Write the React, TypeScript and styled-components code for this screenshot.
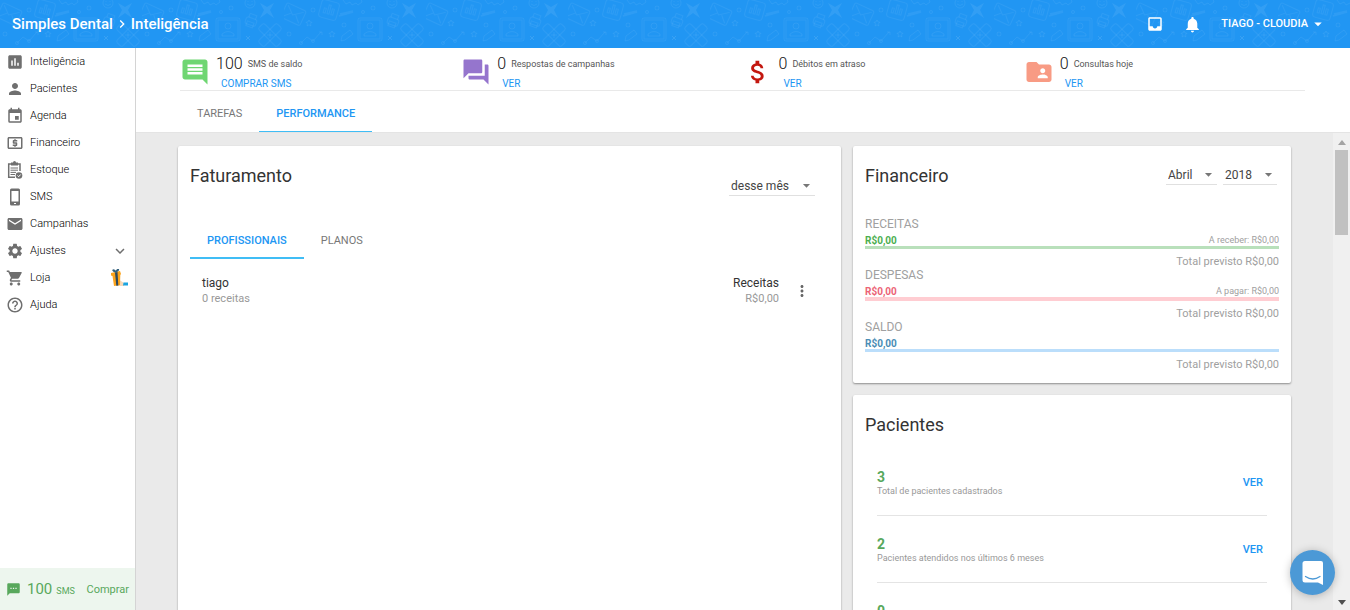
import React from 'react';
import styled, { createGlobalStyle } from 'styled-components';
import {
  MdArrowDropDown, MdAssessment, MdAttachMoney, MdComment, MdEvent, MdExpandMore, MdFolderShared,
  MdHelpOutline, MdInbox, MdLocalAtm, MdMail, MdMoreVert, MdNotifications, MdPerson,
  MdQuestionAnswer, MdSettings, MdShoppingCart, MdTextsms, MdChevronRight,
} from 'react-icons/md';

const Global = createGlobalStyle`
  *, *::before, *::after { box-sizing: border-box; }
  body { margin: 0; font-family: Roboto, "Liberation Sans", sans-serif; font-size: 12px; color: #333; background: #fff; }
  button, select { font-family: inherit; margin: 0; padding: 0; border: 0; background: none; cursor: pointer; }
  a { text-decoration: none; color: inherit; }
  h1, h2, p, ul { margin: 0; padding: 0; font-weight: 400; }
  ul { list-style: none; }
  svg { display: block; flex: none; }
`;

const Page = styled.div`
  display: flex;
  flex-direction: column;
  height: 100vh;
  overflow: hidden;
`;

const Header = styled.header`
  position: relative;
  display: flex;
  flex: none;
  align-items: center;
  justify-content: space-between;
  height: 48px;
  padding: 0 23px 0 12px;
  background: #2196f3;
  color: #fff;
`;

const HeaderArt = styled.svg`
  position: absolute;
  inset: 0;
  width: 100%;
  height: 100%;
`;

const Crumbs = styled.h1`
  position: relative;
  display: flex;
  align-items: center;
  gap: 1px;
  font-size: 15px;
  font-weight: 500;
  line-height: 20px;
`;

const HeaderActions = styled.div`
  position: relative;
  display: flex;
  align-items: center;
`;

const IconButton = styled.button`
  display: flex;
  margin-right: 19px;
  color: inherit;
`;

const UserButton = styled.button`
  display: flex;
  align-items: center;
  gap: 1px;
  color: inherit;
  font-size: 11px;
  font-weight: 500;
  line-height: 16px;
`;

const Body = styled.div`
  display: flex;
  flex: 1;
  min-height: 0;
`;

const Sidebar = styled.nav`
  display: flex;
  flex: none;
  flex-direction: column;
  justify-content: space-between;
  width: 136px;
  border-right: 1px solid #d4d4d4;
`;

const NavLink = styled.a`
  display: flex;
  align-items: center;
  gap: 6px;
  height: 27px;
  padding: 0 6px;
  color: #000;
  font-size: 11px;
  font-weight: 300;
  svg { color: #6f6f6f; }
`;

const NavEnd = styled.span`
  display: flex;
  margin-left: auto;
`;

const SmsBar = styled.div`
  display: flex;
  align-items: center;
  height: 42px;
  padding: 0 6px;
  background: #edf6ee;
  color: #58a85c;
  font-size: 11px;
  a { margin-left: auto; }
`;

const SmsCount = styled.span`
  display: flex;
  align-items: baseline;
  gap: 4px;
  margin-left: 6px;
  font-size: 9px;
  strong { font-size: 15px; font-weight: 400; }
`;

const Main = styled.main`
  display: flex;
  flex: 1;
  flex-direction: column;
  min-width: 0;
`;

const TopPanel = styled.div`
  flex: none;
  padding: 0 45px 0 44px;
  border-bottom: 1px solid #e4e4e4;
`;

const Stats = styled.div`
  display: grid;
  grid-template-columns: repeat(4, 1fr);
  height: 43px;
  border-bottom: 1px solid #e9e9e9;
`;

const Stat = styled.div<{ $color: string }>`
  display: flex;
  gap: 6px;
  padding-top: 8px;
  > svg { margin-top: 1px; color: ${(p) => p.$color}; }
`;

const StatText = styled.div`
  font-size: 9px;
  color: #555;
`;

const StatValue = styled.div`
  display: flex;
  align-items: center;
  gap: 5px;
  height: 16px;
  line-height: 16px;
  strong { color: #111; font-size: 16px; font-weight: 300; }
`;

const StatLink = styled.a`
  display: block;
  margin: 5px 0 0 5px;
  color: #2196f3;
  font-size: 10px;
  line-height: 14px;
`;

const Tabs = styled.div`
  display: flex;
  height: 41px;
`;

const Tab = styled.button<{ $on?: boolean; $thick?: boolean }>`
  padding: ${(p) => (p.$thick ? 2 : 4)}px 17px 0;
  border-bottom: ${(p) => (p.$thick ? 2 : 1)}px solid ${(p) => (p.$on ? '#40bdf5' : 'transparent')};
  color: ${(p) => (p.$on ? '#2196f3' : '#777')};
  font-size: 11px;
  font-weight: ${(p) => (p.$on ? 500 : 400)};
`;

const Viewport = styled.div`
  display: flex;
  flex: 1;
  min-height: 0;
  background: #eaeaea;
`;

const Board = styled.div`
  display: grid;
  flex: 1;
  grid-template-columns: 3fr 2fr;
  min-width: 0;
  padding: 7px 36px;
  overflow: hidden;
`;

const Cell = styled.div`
  display: flex;
  flex-direction: column;
  gap: 12px;
  min-width: 0;
  padding: 6px;
`;

const Card = styled.section<{ $tall?: boolean }>`
  flex: none;
  min-height: ${(p) => (p.$tall ? '520px' : '0')};
  padding: 18px 12px 12px;
  border-radius: 2px;
  background: #fff;
  box-shadow: 0 1px 2px rgba(0, 0, 0, 0.4);
`;

const CardHead = styled.div<{ $drop?: boolean }>`
  display: flex;
  justify-content: space-between;
  align-items: flex-start;
  height: 50px;
  padding-right: ${(p) => (p.$drop ? 14 : 2)}px;
  > div { display: flex; gap: 6px; padding-top: ${(p) => (p.$drop ? 11 : 0)}px; }
`;

const CardTitle = styled.h2`
  color: #333;
  font-size: 18px;
  line-height: 24px;
`;

const SelectBox = styled.label<{ $width: number }>`
  display: flex;
  align-items: center;
  width: ${(p) => p.$width}px;
  height: 21px;
  border-bottom: 1px solid #e0e0e0;
  color: #777;
  select {
    flex: 1;
    min-width: 0;
    padding: 1px 0 0 2px;
    appearance: none;
    color: #444;
    font-size: 12px;
    line-height: 16px;
    outline: 0;
  }
`;

const CardTabs = styled.div`
  display: flex;
  height: 38px;
  margin-top: 7px;
`;

const Person = styled.div`
  display: flex;
  justify-content: space-between;
  padding: 16px 18px 0 12px;
  font-size: 12px;
  line-height: 16px;
  color: #333;
  small { display: block; color: #999; font-size: 11px; line-height: 15px; }
`;

const PersonEnd = styled.div`
  display: flex;
  align-items: center;
  gap: 14px;
  text-align: right;
  button { color: #666; }
`;

const Group = styled.div`
  color: #a0a0a0;
  font-size: 11px;
  h3 { margin: 0; font-size: 12px; font-weight: 400; line-height: 14px; }
  p { padding-top: 6px; line-height: 13px; text-align: right; }
`;

const GroupLine = styled.div<{ $color: string; $bar: string; $size: number }>`
  display: flex;
  justify-content: space-between;
  border-bottom: ${(p) => p.$size}px solid ${(p) => p.$bar};
  font-size: 9px;
  line-height: 11px;
  padding-top: 4px;
  strong { color: ${(p) => p.$color}; font-size: 10px; font-weight: 700; }
`;

const Groups = styled.div`
  padding-top: 3px;
`;

const PatientList = styled.ul`
  && { margin-top: 12px; }
`;

const PatientRow = styled.li`
  display: flex;
  align-items: center;
  justify-content: space-between;
  height: 67px;
  margin: 0 12px;
  padding: 2px 4px 0 0;
  border-bottom: 1px solid #e4e4e4;
  color: #999;
  font-size: 9px;
  line-height: 12px;
  strong { display: block; color: #58a85c; font-size: 14px; line-height: 16px; }
  a { color: #2196f3; font-size: 11px; font-weight: 500; }
`;

const ScrollTrack = styled.div`
  display: flex;
  flex: none;
  flex-direction: column;
  align-items: center;
  justify-content: space-between;
  width: 17px;
  padding: 7px 0 5px;
  background: #f0f0f0;
`;

const ScrollTop = styled.div`
  display: flex;
  flex-direction: column;
  align-items: center;
  gap: 5px;
`;

const ScrollThumb = styled.div`
  width: 13px;
  height: 85px;
  background: #c1c1c1;
`;

const ChatButton = styled.button`
  position: fixed;
  right: 15px;
  bottom: 15px;
  display: flex;
  align-items: center;
  justify-content: center;
  width: 45px;
  height: 45px;
  border-radius: 50%;
  background: #4c99d6;
  box-shadow: 0 1px 8px rgba(0, 0, 0, 0.25);
`;

const HeaderPattern = () => (
  <HeaderArt aria-hidden="true">
    <defs>
      <pattern id="doodles" width="142" height="48" patternUnits="userSpaceOnUse">
        <g fill="none" stroke="#fff" strokeOpacity=".06" strokeWidth="1">
          <path d="M118 3l7 4 7-4-4 7 4 8-7-5-7 5 4-8z" fill="#fff" fillOpacity=".08" stroke="none" />
          <g transform="rotate(25 9 14)"><rect x="-1" y="6" width="21" height="16" rx="2" /><path d="M1 8l8 7 9-7M1 20l6-6M18 20l-6-6" /></g>
          <g transform="rotate(15 45 10)"><rect x="36" y="1" width="18" height="18" rx="3" /><path d="M40 14V9h2v5zM44 14V5h2v9zM48 14V8h2v6z" /></g>
          <rect x="74" y="18" width="24" height="23" rx="2" /><rect x="76" y="20" width="20" height="19" />
          <circle cx="86" cy="26" r="3" /><path d="M80 36v-2q6-5 12 0v2z" />
          <circle cx="29" cy="10" r="2" /><circle cx="79" cy="12" r="1.5" /><circle cx="89" cy="8" r="2" /><circle cx="60" cy="25" r="2" /><circle cx="5" cy="34" r="2" />
          <path d="M55 16l14-4M56 14l13-3" strokeWidth="1.5" />
          <path d="M59 0l3 4 4-2 2 3 4-2 2 2 4-3-1-3" />
          <circle cx="108" cy="3" r="5" /><path d="M105 4q3 3 6 0M106 1v1M110 1v1" />
          <g transform="rotate(20 109 20)"><rect x="104" y="18" width="11" height="7" rx="2" /><path d="M106 18v-4h7v4M106 22h7v5h-7z" /></g>
          <g transform="translate(128 35)"><rect x="-4" y="-13" width="8" height="26" rx="2" transform="rotate(45)" /><rect x="-4" y="-13" width="8" height="26" rx="2" transform="rotate(-45)" /><path d="M-3 0h6M0-3v6" /></g>
          <path d="M17 43l6-6 6 4 8-9M35 32h3v3" /><circle cx="17" cy="43" r="1.5" /><circle cx="29" cy="41" r="1.5" />
          <path d="M25 20l1 2 2 .3-1.500 1.500.4 2-1.900-1-1.900 1 .4-2-1.500-1.500 2-.3zM48 31l1 2 2 .3-1.500 1.500.4 2-1.900-1-1.900 1 .4-2-1.500-1.500 2-.3z" />
          <path d="M57 41l1-5 8-6 3 4-8 6z" /><path d="M104 36l4 4m0-4l-4 4" strokeOpacity=".1" />
        </g>
      </pattern>
    </defs>
    <rect width="100%" height="100%" fill="url(#doodles)" />
  </HeaderArt>
);

const StockIcon = () => (
  <svg width="18" height="18" viewBox="0 0 18 18" fill="none" stroke="currentColor">
    <path d="M9 16.200H2.700V3H14v7" strokeWidth="1.500" />
    <path d="M5 1.600h2a1.500 1.500 0 013 0h2v3H5z" fill="currentColor" stroke="none" />
    <path d="M4.500 7h7.500M4.500 9.200h7.500M4.500 11.400H10M4.500 13.500H9" />
    <circle cx="13" cy="14.500" r="3.300" fill="currentColor" stroke="none" />
    <path d="M11.500 14.500l1.200 1.200 2-2.200" stroke="#fff" />
  </svg>
);

const PhoneIcon = () => (
  <svg width="18" height="18" viewBox="0 0 18 18">
    <path fill="currentColor" fillRule="evenodd" d="M5.500.5h7a1.500 1.500 0 011.500 1.500v14a1.500 1.500 0 01-1.500 1.500h-7A1.500 1.500 0 014 16V2A1.500 1.500 0 015.500.5zM5.500 3v10.500h7V3zM8 15v1h2v-1z" />
  </svg>
);

const GiftIcon = () => (
  <svg width="19" height="18" viewBox="0 0 19 18">
    <path d="M8 10l6 4v3H7z" fill="#f8d9b8" />
    <path d="M1 4l9-2 1 3-.7 1L10 16l-6 1L2.500 7 1 6.500z" fill="#fba31c" />
    <path d="M5 3.500l2.500-.5.800 13.500-2 .3z" fill="#2d4a5e" />
    <path d="M6 3C3-1 1 2 6 3c1-4 5-3 0 0z" fill="none" stroke="#35627e" strokeWidth="1.300" />
    <path d="M13.500 13.500H18V16.500h-5z" fill="#1ba4e0" />
  </svg>
);

const NAV = [
  { label: 'Inteligência', icon: <MdAssessment size={18} /> },
  { label: 'Pacientes', icon: <MdPerson size={18} /> },
  { label: 'Agenda', icon: <MdEvent size={18} /> },
  { label: 'Financeiro', icon: <MdLocalAtm size={18} /> },
  { label: 'Estoque', icon: <StockIcon /> },
  { label: 'SMS', icon: <PhoneIcon /> },
  { label: 'Campanhas', icon: <MdMail size={18} /> },
  { label: 'Ajustes', icon: <MdSettings size={18} />, end: <MdExpandMore size={18} /> },
  { label: 'Loja', icon: <MdShoppingCart size={18} />, end: <GiftIcon /> },
  { label: 'Ajuda', icon: <MdHelpOutline size={18} /> },
];

const STATS = [
  { value: '100', label: 'SMS de saldo', link: 'COMPRAR SMS', color: '#6fd672', icon: <MdComment size={30} /> },
  { value: '0', label: 'Respostas de campanhas', link: 'VER', color: '#9575cd', icon: <MdQuestionAnswer size={30} /> },
  { value: '0', label: 'Débitos em atraso', link: 'VER', color: '#c3170f', icon: <MdAttachMoney size={30} /> },
  { value: '0', label: 'Consultas hoje', link: 'VER', color: '#f89b84', icon: <MdFolderShared size={30} /> },
];

const GROUPS = [
  { name: 'RECEITAS', pending: 'A receber: R$0,00', color: '#4caf50', bar: '#b9e0bb', size: 3 },
  { name: 'DESPESAS', pending: 'A pagar: R$0,00', color: '#ec6476', bar: '#ffcdd2', size: 4 },
  { name: 'SALDO', pending: '', color: '#4a8db5', bar: '#bbdefb', size: 3 },
];

const PATIENTS = [
  { count: 3, label: 'Total de pacientes cadastrados' },
  { count: 2, label: 'Pacientes atendidos nos últimos 6 meses' },
  { count: 0, label: '' },
];

const Select = ({ label, value, width }: { label: string; value: string; width: number }) => (
  <SelectBox $width={width}>
    <select aria-label={label} defaultValue={value}><option>{value}</option></select>
    <MdArrowDropDown size={17} />
  </SelectBox>
);

export default function App() {
  return (
    <Page>
      <Global />
      <Header>
        <HeaderPattern />
        <Crumbs>Simples Dental <MdChevronRight size={16} /> Inteligência</Crumbs>
        <HeaderActions>
          <IconButton aria-label="Caixa de entrada"><MdInbox size={18} /></IconButton>
          <IconButton aria-label="Notificações"><MdNotifications size={19} /></IconButton>
          <UserButton>TIAGO - CLOUDIA <MdArrowDropDown size={18} /></UserButton>
        </HeaderActions>
      </Header>
      <Body>
        <Sidebar>
          <ul>
            {NAV.map((n) => (
              <li key={n.label}>
                <NavLink href="#">{n.icon}{n.label}{n.end && <NavEnd>{n.end}</NavEnd>}</NavLink>
              </li>
            ))}
          </ul>
          <SmsBar>
            <MdTextsms size={15} />
            <SmsCount><strong>100</strong> SMS</SmsCount>
            <a href="#">Comprar</a>
          </SmsBar>
        </Sidebar>
        <Main>
          <TopPanel>
            <Stats>
              {STATS.map((s) => (
                <Stat key={s.label} $color={s.color}>
                  {s.icon}
                  <StatText>
                    <StatValue><strong>{s.value}</strong>{s.label}</StatValue>
                    <StatLink href="#">{s.link}</StatLink>
                  </StatText>
                </Stat>
              ))}
            </Stats>
            <Tabs>
              <Tab>TAREFAS</Tab>
              <Tab $on>PERFORMANCE</Tab>
            </Tabs>
          </TopPanel>
          <Viewport>
            <Board>
              <Cell>
                <Card $tall>
                  <CardHead $drop>
                    <CardTitle>Faturamento</CardTitle>
                    <div><Select label="Período" value="desse mês" width={86} /></div>
                  </CardHead>
                  <CardTabs>
                    <Tab $on $thick>PROFISSIONAIS</Tab>
                    <Tab $thick>PLANOS</Tab>
                  </CardTabs>
                  <Person>
                    <div>tiago<small>0 receitas</small></div>
                    <PersonEnd>
                      <div>Receitas<small>R$0,00</small></div>
                      <button aria-label="Mais opções"><MdMoreVert size={18} /></button>
                    </PersonEnd>
                  </Person>
                </Card>
              </Cell>
              <Cell>
                <Card>
                  <CardHead>
                    <CardTitle>Financeiro</CardTitle>
                    <div>
                      <Select label="Mês" value="Abril" width={51} />
                      <Select label="Ano" value="2018" width={54} />
                    </div>
                  </CardHead>
                  <Groups>
                    {GROUPS.map((g) => (
                      <Group key={g.name}>
                        <h3>{g.name}</h3>
                        <GroupLine $color={g.color} $bar={g.bar} $size={g.size}>
                          <strong>R$0,00</strong><span>{g.pending}</span>
                        </GroupLine>
                        <p>Total previsto R$0,00</p>
                      </Group>
                    ))}
                  </Groups>
                </Card>
                <Card>
                  <CardTitle>Pacientes</CardTitle>
                  <PatientList>
                    {PATIENTS.map((p) => (
                      <PatientRow key={p.count}>
                        <div><strong>{p.count}</strong>{p.label || <>&nbsp;</>}</div>
                        {p.label && <a href="#">VER</a>}
                      </PatientRow>
                    ))}
                  </PatientList>
                </Card>
              </Cell>
            </Board>
            <ScrollTrack aria-hidden="true">
              <ScrollTop>
                <svg width="8" height="5" viewBox="0 0 8 5"><path d="M4 0l4 5H0z" fill="#a3a3a3" /></svg>
                <ScrollThumb />
              </ScrollTop>
              <svg width="8" height="5" viewBox="0 0 8 5"><path d="M0 0h8L4 5z" fill="#505050" /></svg>
            </ScrollTrack>
          </Viewport>
        </Main>
      </Body>
      <ChatButton aria-label="Abrir conversa">
        <svg width="22" height="24" viewBox="0 0 22 24">
          <path d="M3 0h16a2 2 0 012 2v22l-5-2.500H3a2.500 2.500 0 01-2.500-2.500V2.500A2.500 2.500 0 013 0z" fill="#fff" />
          <path d="M3.500 15.500q7.300 5 14.500 0" fill="none" stroke="#4c99d6" strokeWidth="1.300" strokeLinecap="round" />
        </svg>
      </ChatButton>
    </Page>
  );
}
